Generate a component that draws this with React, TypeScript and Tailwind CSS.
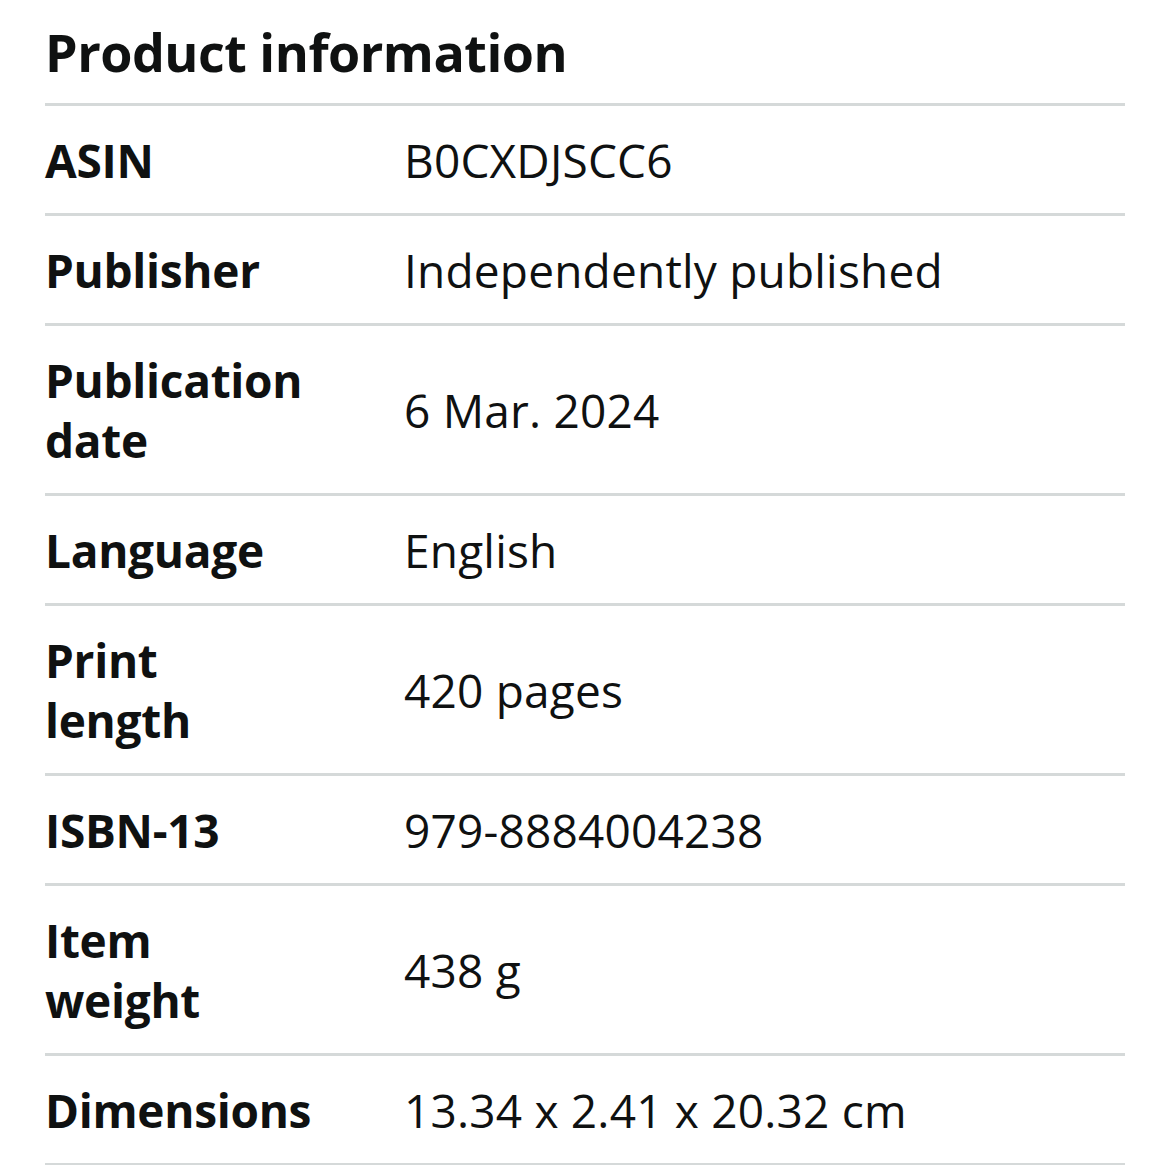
import React from "react";

const rows: [string[], string][] = [
  [["ASIN"], "B0CXDJSCC6"],
  [["Publisher"], "Independently published"],
  [["Publication", "date"], "6 Mar. 2024"],
  [["Language"], "English"],
  [["Print", "length"], "420 pages"],
  [["ISBN-13"], "979-8884004238"],
  [["Item", "weight"], "438 g"],
  [["Dimensions"], "13.34 x 2.41 x 20.32 cm"],
];

export default function App() {
  return (
    <div
      className="w-[1170px] h-[1165px] bg-white text-[#0f1111] overflow-hidden"
      style={{ fontFamily: '"Open Sans", "Noto Sans", Arial, sans-serif' }}
    >
      <div className="pl-[45px] pr-[45px]">
        <h2 className="text-[52px] leading-[64px] font-bold pt-[20px] pb-[19px] tracking-[-0.5px]">
          Product information
        </h2>
        <div className="border-b-[3px] border-[#d5d9d9]">
          {rows.map(([k, v]) => (
            <div
              key={k.join(" ")}
              className="flex items-center border-t-[3px] border-[#d5d9d9] pt-6 pb-[23px]"
            >
              <div className="w-[359px] shrink-0 pr-[40px] font-bold text-[46px] leading-[60px] tracking-[-0.3px]">
                {k.map((line) => (
                  <div key={line}>{line}</div>
                ))}
              </div>
              <div className="text-[46px] leading-[60px] tracking-[0.2px]">{v}</div>
            </div>
          ))}
        </div>
      </div>
    </div>
  );
}
